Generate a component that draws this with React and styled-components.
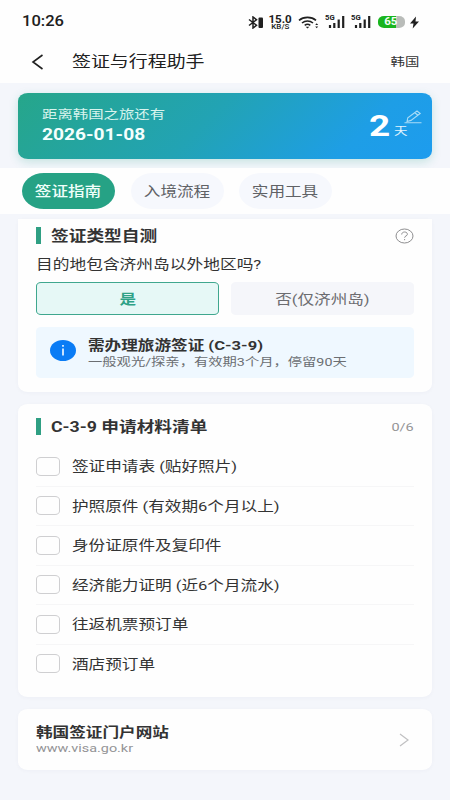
import React, { useState } from "react";
import styled, { createGlobalStyle } from "styled-components";

const GlobalStyle = createGlobalStyle`
  * {
    box-sizing: border-box;
  }
  body {
    margin: 0;
    background: #f4f6fb;
    font-family: Roboto, "Noto Sans CJK SC", sans-serif;
  }
`;

const Screen = styled.div`
  display: flex;
  flex-direction: column;
  width: 450px;
  height: 800px;
  overflow: hidden;
  background: #f4f6fb;
`;

const Text = styled.span`
  display: block;
  flex: none;
  white-space: nowrap;
  font-size: ${p => p.$size || 13.5}px;
  line-height: ${p => p.$line || 18}px;
  font-weight: ${p => p.$weight || 400};
  color: ${p => p.$color || "#333"};
  transform: scaleX(${p => p.$wide || 1.23});
  transform-origin: ${p => p.$from || "left"} center;
`;

const StatusBar = styled.div`
  display: flex;
  align-items: center;
  justify-content: space-between;
  height: 42px;
  padding: 2px 31px 0 22px;
  background: #fefefe;
`;

const StatusIcons = styled.div`
  display: flex;
  align-items: center;
`;

const Speed = styled.div`
  display: flex;
  flex-direction: column;
  align-items: center;
  width: 22px;
  margin: 0 7px 0 5px;
`;

const Signal = styled.div`
  display: grid;
  width: 20px;
  height: 14px;
  margin-right: 6px;

  > * {
    grid-area: 1 / 1;
  }
`;

const Battery = styled.div`
  display: flex;
  align-items: center;
  justify-content: center;
  width: 27px;
  height: 12px;
  margin: 0 5px 0 1px;
  padding-right: 1px;
  border-radius: 6px / 5px;
  background: linear-gradient(90deg, #19b51e 66%, #b9bcb9 66%);
`;

const Header = styled.header`
  display: flex;
  align-items: center;
  height: 41px;
  padding: 0 31px 2px 31px;
  background: #fefefe;
`;

const HeaderTitle = styled.div`
  flex: 1;
  padding-left: 28px;
`;

const BannerArea = styled.section`
  height: 85px;
  padding: 10px 18px 9px;
`;

const Banner = styled.div`
  display: flex;
  justify-content: space-between;
  height: 66px;
  padding: 12px 10px 0 24px;
  border-radius: 10px / 8px;
  background: linear-gradient(135deg, #26a68a 0%, #22a3b4 45%, #1e9ee6 80%, #1d9cee 100%);
  box-shadow: 0 3px 10px rgba(38, 166, 138, 0.22);
`;

const Countdown = styled.div`
  display: flex;
  align-items: flex-start;
`;

const DayUnit = styled.div`
  width: 10px;
  margin: 18px 0 0 4px;
`;

const Tabs = styled.nav`
  display: flex;
  gap: 15.5px;
  height: 46px;
  padding: 5px 22px;
  background: #fefefe;
`;

const Tab = styled.button`
  display: flex;
  align-items: center;
  justify-content: center;
  width: 93px;
  height: 36px;
  padding: 0 1px 0 0;
  border: 0;
  border-radius: 22px / 18px;
  font-family: inherit;
  background: ${p => (p.$active ? "#26a285" : "#f6f8fd")};
`;

const Content = styled.main`
  display: flex;
  flex-direction: column;
  gap: 12px;
  padding: 5px 18px 0;
`;

const Card = styled.section`
  height: ${p => p.$height}px;
  padding: ${p => p.$pad};
  border-radius: ${p => (p.$flatTop ? "0 0 10px 10px / 0 0 8px 8px" : "10px / 8px")};
  background: #fefefe;
  box-shadow: 0 1px 4px rgba(30, 40, 80, 0.03);
`;

const CardHead = styled.div`
  display: flex;
  align-items: center;
  justify-content: space-between;
  height: 18px;
`;

const CardTitle = styled.div`
  display: flex;
  align-items: flex-start;
  gap: 9.5px;
  height: 18px;

  &::before {
    content: "";
    width: 5px;
    height: 17px;
    background: #2f9f83;
  }
`;

const Question = styled.div`
  padding-top: 10px;
`;

const Choices = styled.div`
  display: grid;
  grid-template-columns: 1fr 1fr;
  gap: 12px;
  margin-top: 9px;
`;

const Choice = styled.button`
  display: flex;
  align-items: center;
  justify-content: center;
  height: 33px;
  padding: 0;
  border: 1px solid ${p => (p.$selected ? "#3fa78e" : "#f5f6fa")};
  border-radius: 5px / 4px;
  font-family: inherit;
  background: ${p => (p.$selected ? "#e6f8f6" : "#f5f6fa")};
`;

const Notice = styled.div`
  display: flex;
  align-items: flex-start;
  height: 51px;
  margin-top: 12px;
  padding: 13px 14px 0;
  border-radius: 5px / 4px;
  background: #eff8ff;
`;

const NoticeText = styled.div`
  padding-left: 12px;
  margin-top: -4px;
`;

const CheckList = styled.ul`
  margin: 11px 0 0;
  padding: 0;
  list-style: none;
`;

const CheckItem = styled.li`
  display: flex;
  align-items: center;
  gap: 12px;
  height: 39.5px;
  border-bottom: 1px solid #f6f6f7;

  &:last-child {
    border-bottom-color: transparent;
  }
`;

const Checkbox = styled.span`
  width: 24px;
  height: 19px;
  border: 1px solid #cfcfd1;
  border-radius: 5px / 4px;
  background: ${p => (p.$checked ? "#26a285" : "#fefefe")};
`;

const LinkRow = styled.div`
  display: flex;
  align-items: center;
  justify-content: space-between;
  height: 100%;
`;

const Svg = styled.svg`
  display: block;
  flex: none;
  fill: none;
  stroke: ${p => p.$stroke || "#202020"};
  stroke-width: ${p => p.$weight || 1.5};
`;

const WifiIcon = styled(Svg)`
  margin-right: 6px;
`;

const PenIcon = styled(Svg)`
  margin-top: 5px;
`;

const tabs = ["签证指南", "入境流程", "实用工具"];

const materials = [
  "签证申请表 (贴好照片)",
  "护照原件 (有效期6个月以上)",
  "身份证原件及复印件",
  "经济能力证明 (近6个月流水)",
  "往返机票预订单",
  "酒店预订单"
];

function SignalBars() {
  return (
    <Signal>
      <Svg width="20" height="14" viewBox="0 0 20 14" $weight="2.2">
        <path d="M5 13v-3M9.3 13V8M13.7 13V4.5M18.2 13V1" />
      </Svg>
      <Text $size={7} $line={6} $weight={700} $color="#202020" $wide={1.1}>
        5G
      </Text>
    </Signal>
  );
}

function StatusRow() {
  return (
    <StatusBar>
      <Text $size={14.5} $weight={500} $color="#202020" $wide={1.14}>
        10:26
      </Text>
      <StatusIcons>
        <Svg width="16" height="13" viewBox="0 0 16 13" $weight="1.5">
          <path d="M1 3.5 8.5 9.3 5 12V1l3.5 2.7L1 9.5" />
          <rect x="10.5" y="1.5" width="4.5" height="10.5" rx="1" fill="#202020" stroke="none" />
        </Svg>
        <Speed>
          <Text $size={10} $line={9} $weight={700} $color="#202020" $wide={1.16} $from="center">
            15.0
          </Text>
          <Text $size={6.5} $line={6} $weight={500} $color="#202020" $wide={1.23} $from="center">
            KB/S
          </Text>
        </Speed>
        <WifiIcon width="21" height="13" viewBox="0 0 21 13" $weight="1.6">
          <path d="M1 4.4C5.5.3 13.5.3 18 4.4M4 7c3.2-2.7 7.8-2.7 11 0M6.7 9.300c1.7-1.300 3.900-1.300 5.600 0" />
          <path
            d="M7.700 10.700h3.600l-1.800 1.800zM17.200 9l1.500-1.700L20.200 9zM17.200 10.500l1.500 1.700 1.500-1.700z"
            fill="#202020"
            stroke="none"
          />
        </WifiIcon>
        <SignalBars />
        <SignalBars />
        <Battery>
          <Text $size={10} $line={12} $weight={700} $color="#f4fff4" $wide={1.15} $from="center">
            65
          </Text>
        </Battery>
        <Svg width="9" height="13" viewBox="0 0 9 13">
          <path d="M6 .5 0 7.5h3.500L2.700 12.500 9 5.500H5.500z" fill="#202020" stroke="none" />
        </Svg>
      </StatusIcons>
    </StatusBar>
  );
}

export default function App() {
  const [activeTab, setActiveTab] = useState(0);
  const [outsideJeju, setOutsideJeju] = useState(true);
  const [checked, setChecked] = useState([]);

  const toggle = i => {
    setChecked(checked.includes(i) ? checked.filter(c => c !== i) : [...checked, i]);
  };

  return (
    <Screen>
      <GlobalStyle />
      <StatusRow />
      <Header>
        <Svg width="13" height="16" viewBox="0 0 13 16" $weight="1.6">
          <path d="M11.5 1 2 8l9.500 7" />
        </Svg>
        <HeaderTitle>
          <Text $size={15.4} $line={22} $color="#202020">
            签证与行程助手
          </Text>
        </HeaderTitle>
        <Text $size={11.7} $color="#333" $from="right">
          韩国
        </Text>
      </Header>

      <BannerArea>
        <Banner>
          <div>
            <Text $size={12.5} $line={20} $color="#d9f4ee">
              距离韩国之旅还有
            </Text>
            <Text $size={15.6} $line={21} $weight={700} $color="#f4fffd">
              2026-01-08
            </Text>
          </div>
          <Countdown>
            <Text $size={30} $line={41} $weight={700} $color="#fff" $from="right">
              2
            </Text>
            <DayUnit>
              <Text $size={11} $color="#e2f4ff">
                天
              </Text>
            </DayUnit>
            <PenIcon width="18" height="14" viewBox="0 0 18 14" $stroke="#a9dcf7" $weight="1.1">
              <path d="M.5 12.800h17M3 11.500l.8-3.700L13 1l3.200 2.500L7 10.400zM10.800 2.700 14 5.200" />
            </PenIcon>
          </Countdown>
        </Banner>
      </BannerArea>

      <Tabs>
        {tabs.map((tab, i) => (
          <Tab key={tab} $active={i === activeTab} onClick={() => setActiveTab(i)}>
            <Text
              $weight={i === activeTab ? 500 : 400}
              $color={i === activeTab ? "#effffa" : "#606266"}
              $from="center"
            >
              {tab}
            </Text>
          </Tab>
        ))}
      </Tabs>

      <Content>
        <Card $height={173} $pad="8px 18px 0" $flatTop>
          <CardHead>
            <CardTitle>
              <Text $size={14.4} $line={20} $weight={700}>
                签证类型自测
              </Text>
            </CardTitle>
            <Svg width="19" height="16" viewBox="0 0 19 16" $stroke="#8e8e90" $weight="1">
              <ellipse cx="9.5" cy="8" rx="8.5" ry="7" />
              <path d="M6.7 6.500c0-3.300 5.700-3.300 5.700-.2 0 1.700-2.800 1.600-2.800 3.400M9.600 11v1.200" />
            </Svg>
          </CardHead>
          <Question>
            <Text $size={13.6}>目的地包含济州岛以外地区吗?</Text>
          </Question>
          <Choices>
            <Choice $selected={outsideJeju} onClick={() => setOutsideJeju(true)}>
              <Text $size={13.5} $weight={700} $color="#2fa286" $from="center">
                是
              </Text>
            </Choice>
            <Choice $selected={!outsideJeju} onClick={() => setOutsideJeju(false)}>
              <Text $color="#6c6c70" $from="center">
                否(仅济州岛)
              </Text>
            </Choice>
          </Choices>
          <Notice>
            <Svg width="26" height="21" viewBox="0 0 26 21" $stroke="#eaf5ff" $weight="1.7">
              <ellipse cx="13" cy="10.5" rx="13" ry="10.5" fill="#0a7cf5" stroke="none" />
              <path d="M13 8.500v7M13 5v1.700" />
            </Svg>
            <NoticeText>
              <Text $weight={700}>需办理旅游签证 (C-3-9)</Text>
              <Text $size={11.5} $line={16} $color="#6b6e72" $wide={1.243}>
                一般观光/探亲，有效期3个月，停留90天
              </Text>
            </NoticeText>
          </Notice>
        </Card>

        <Card $height={293} $pad="14px 18px 0">
          <CardHead>
            <CardTitle>
              <Text $size={14.4} $line={20} $weight={700}>
                C-3-9 申请材料清单
              </Text>
            </CardTitle>
            <Text $size={11.5} $color="#949496" $wide={1.26} $from="right">
              {checked.length}/6
            </Text>
          </CardHead>
          <CheckList>
            {materials.map((name, i) => (
              <CheckItem key={name} onClick={() => toggle(i)}>
                <Checkbox $checked={checked.includes(i)} />
                <Text>{name}</Text>
              </CheckItem>
            ))}
          </CheckList>
        </Card>

        <Card $height={61} $pad="0 23px 0 18px">
          <LinkRow>
            <div>
              <Text $weight={700}>韩国签证门户网站</Text>
              <Text $size={11.5} $line={15} $color="#949496" $wide={1.25}>
                www.visa.go.kr
              </Text>
            </div>
            <Svg width="10" height="14" viewBox="0 0 10 14" $stroke="#c0c0c2" $weight="1.2">
              <path d="m1 1 8 6-8 6" />
            </Svg>
          </LinkRow>
        </Card>
      </Content>
    </Screen>
  );
}
